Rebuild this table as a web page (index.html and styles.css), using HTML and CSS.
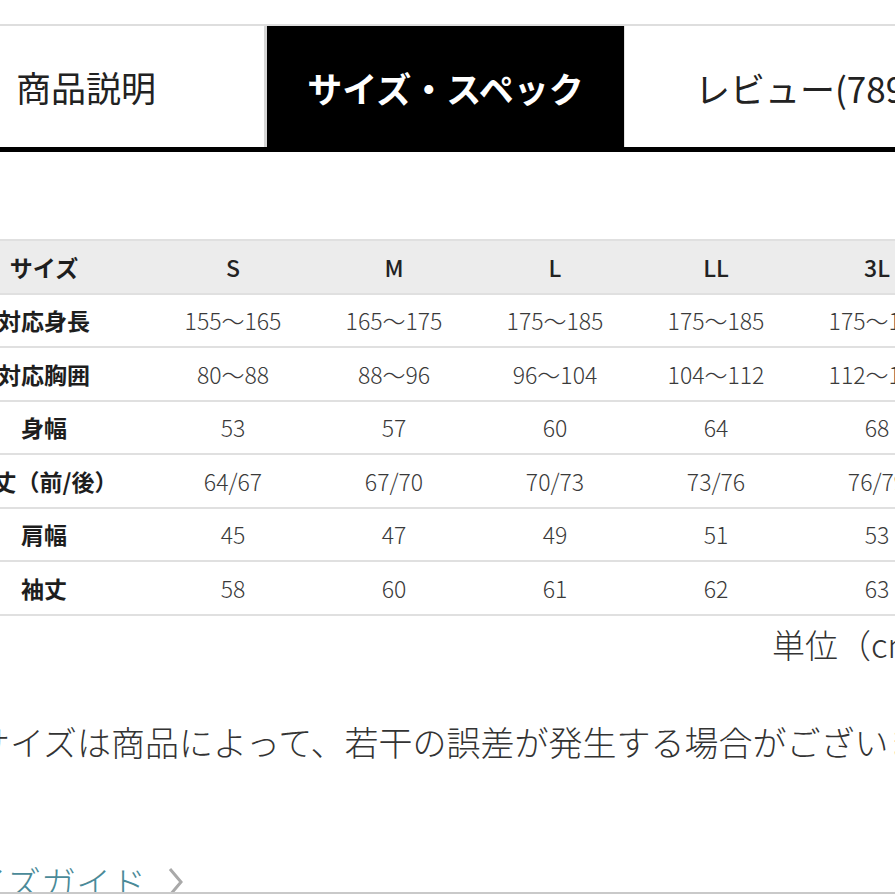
FILE: index.html
```html
<!DOCTYPE html>
<html lang="ja">
<head>
<meta charset="utf-8">
<title>サイズ・スペック</title>
<link rel="stylesheet" href="styles.css">
</head>
<body>
<div class="viewport">
  <nav class="tabs">
    <div class="tab tab-desc">商品説明</div>
    <div class="tab tab-active">サイズ・スペック</div>
    <div class="tab tab-review">レビュー(789)</div>
  </nav>

  <table class="size-table">
    <colgroup>
      <col class="col-label">
      <col class="col-size"><col class="col-size"><col class="col-size"><col class="col-size"><col class="col-size">
    </colgroup>
    <thead>
      <tr><th class="label">サイズ</th><th>S</th><th>M</th><th>L</th><th>LL</th><th>3L</th></tr>
    </thead>
    <tbody>
      <tr><th class="label">対応身長</th><td>155〜165</td><td>165〜175</td><td>175〜185</td><td>175〜185</td><td>175〜185</td></tr>
      <tr><th class="label">対応胸囲</th><td>80〜88</td><td>88〜96</td><td>96〜104</td><td>104〜112</td><td>112〜120</td></tr>
      <tr><th class="label">身幅</th><td>53</td><td>57</td><td>60</td><td>64</td><td>68</td></tr>
      <tr><th class="label">着丈（前/後）</th><td>64/67</td><td>67/70</td><td>70/73</td><td>73/76</td><td>76/79</td></tr>
      <tr><th class="label">肩幅</th><td>45</td><td>47</td><td>49</td><td>51</td><td>53</td></tr>
      <tr><th class="label">袖丈</th><td>58</td><td>60</td><td>61</td><td>62</td><td>63</td></tr>
    </tbody>
  </table>

  <p class="unit">単位（cm）</p>
  <p class="note">サイズは商品によって、若干の誤差が発生する場合がございます。</p>

  <div class="guide-wrap">
    <a class="guide" href="#">サイズガイド<span class="chev">
      <svg width="16" height="30" viewBox="0 0 16 30"><path d="M2 2 L13 15 L2 28" fill="none" stroke="#a9a9a9" stroke-width="3"/></svg>
    </span></a>
  </div>
</div>
</body>
</html>
```

FILE: styles.css
```css
html, body {
  margin: 0;
  padding: 0;
  background: #fff;
}

body {
  font-family: "Noto Sans CJK JP", "Noto Sans", sans-serif;
  color: #222;
}

.viewport {
  width: 895px;
  height: 895px;
  overflow: hidden;
  position: relative;
}

/* Tabs */
.tabs {
  display: grid;
  grid-template-columns: 359px 357px 1fr;
  width: 1071px;
  margin: 24px 0 0 -92px;
  border-top: 2px solid #dedede;
  border-bottom: 5px solid #000;
}

.tab {
  height: 121px;
  display: flex;
  align-items: center;
  justify-content: center;
  font-size: 35px;
  white-space: nowrap;
  box-sizing: border-box;
}

.tab-desc {
  border-right: 3px solid #d6d6d6;
  color: #222;
}

.tab-active {
  background: #000;
  color: #fff;
  font-weight: 700;
  padding-top: 2px;
}

.tab-review {
  border-left: 1px solid #e2e2e2;
  color: #222;
  padding-top: 2px;
  padding-left: 8px;
}

/* Table */
.size-table {
  margin: 87px 0 0 -64.5px;
  border-collapse: collapse;
  table-layout: fixed;
  width: 1022px;
  border-top: 2px solid #e0e0e0;
}

.col-label { width: 217px; }
.col-size { width: 161px; }

.size-table th,
.size-table td {
  height: 51.5px;
  padding: 0;
  text-align: center;
  vertical-align: middle;
  border-bottom: 2px solid #e0e0e0;
  font-size: 23px;
  white-space: nowrap;
}

.size-table thead th {
  background: #ececec;
  font-weight: 500;
  color: #222;
}

.size-table th.label {
  font-weight: 700;
  color: #1e1e1e;
}

.size-table td {
  font-weight: 300;
  color: #3a3a3a;
}

/* Notes */
.unit {
  margin: 8px 0 0 0;
  padding-left: 772px;
  font-size: 33px;
  line-height: 40px;
  font-weight: 300;
  color: #333;
  white-space: nowrap;
}

.note {
  margin: 58px 0 0 -24px;
  font-size: 34px;
  line-height: 40px;
  font-weight: 300;
  color: #333;
  white-space: nowrap;
}

.guide-wrap {
  margin-top: 97px;
  height: 33px;
  overflow: hidden;
  border-bottom: 2px solid #c9c9c9;
}

.guide {
  display: flex;
  align-items: flex-start;
  margin-left: -63px;
  padding-top: 3px;
  font-size: 35px;
  line-height: 40px;
  font-weight: 300;
  color: #4a8a98;
  text-decoration: none;
  white-space: nowrap;
}

.chev {
  display: inline-flex;
  margin: 5px 0 0 22px;
}
```
